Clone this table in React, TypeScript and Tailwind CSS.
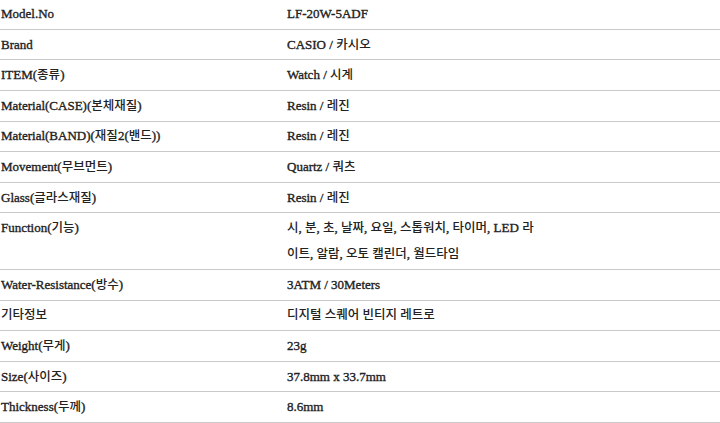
import React from "react";

type Spec = {
  label: string;
  value: string[];
};

const specs: Spec[] = [
  { label: "Model.No", value: ["LF-20W-5ADF"] },
  { label: "Brand", value: ["CASIO / 카시오"] },
  { label: "ITEM(종류)", value: ["Watch / 시계"] },
  { label: "Material(CASE)(본체재질)", value: ["Resin / 레진"] },
  { label: "Material(BAND)(재질2(밴드))", value: ["Resin / 레진"] },
  { label: "Movement(무브먼트)", value: ["Quartz / 쿼츠"] },
  { label: "Glass(글라스재질)", value: ["Resin / 레진"] },
  {
    label: "Function(기능)",
    value: ["시, 분, 초, 날짜, 요일, 스톱워치, 타이머, LED 라", "이트, 알람, 오토 캘린더, 월드타임"],
  },
  { label: "Water-Resistance(방수)", value: ["3ATM / 30Meters"] },
  { label: "기타정보", value: ["디지털 스퀘어 빈티지 레트로"] },
  { label: "Weight(무게)", value: ["23g"] },
  { label: "Size(사이즈)", value: ["37.8mm x 33.7mm"] },
  { label: "Thickness(두께)", value: ["8.6mm"] },
];

// hangul runs use the CJK face at a slightly smaller size
const Mixed = ({ text }: { text: string }) => {
  const parts = text.split(/([\u3131-\u318E\uAC00-\uD7A3]+)/);
  return (
    <>
      {parts.map((p, i) =>
        /[\u3131-\u318E\uAC00-\uD7A3]/.test(p) ? (
          <span key={i} className="text-[12.5px] font-medium [-webkit-text-stroke:0px]">
            {p}
          </span>
        ) : (
          <span key={i}>{p}</span>
        )
      )}
    </>
  );
};

export default function App() {
  return (
    <div className="w-[720px] h-[423px] overflow-hidden bg-white">
      <div className="-mt-[0.8px] font-['Liberation_Serif','Noto_Sans_CJK_KR',serif] text-[13px] text-[#222] [-webkit-text-stroke:0.35px_#222]">
        {specs.map((row) => (
          <div
            key={row.label}
            className="grid grid-cols-[287px_1fr] border-b border-[#c9c9c9] py-[1.8px] leading-[26px]"
          >
            <div className="pl-[1px] whitespace-nowrap">
              <Mixed text={row.label} />
            </div>
            <div className="flex flex-col">
              {row.value.map((line) => (
                <div key={line} className="whitespace-nowrap">
                  <Mixed text={line} />
                </div>
              ))}
            </div>
          </div>
        ))}
      </div>
    </div>
  );
}
